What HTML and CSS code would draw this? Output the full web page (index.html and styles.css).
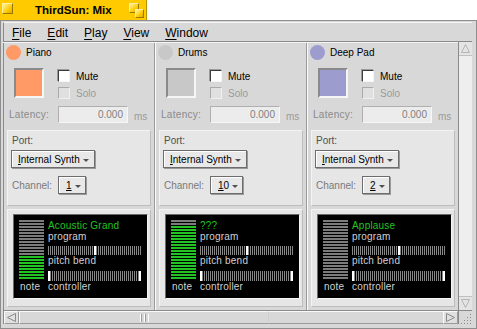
FILE: index.html
```html
<!DOCTYPE html>
<html lang="en">
<head>
  <meta charset="UTF-8" />
  <title>ThirdSun: Mix</title>
  <link rel="stylesheet" href="styles.css">
</head>
<body>
  <div class="tab">
    <span class="close-box"></span>
    <span class="title">ThirdSun: Mix</span>
    <span class="zoom-box"><i class="back"></i><i class="front"></i></span>
  </div>

  <div class="window">
    <nav class="menubar">
      <span><u>F</u>ile</span>
      <span><u>E</u>dit</span>
      <span><u>P</u>lay</span>
      <span><u>V</u>iew</span>
      <span><u>W</u>indow</span>
    </nav>

    <div class="mixer">
      <section class="strip first">
        <div class="strip-head"><span class="dot piano"></span>Piano</div>
        <div class="strip-main">
          <span class="swatch piano"></span>
          <div class="checks">
            <div class="check"><span class="box"></span>Mute</div>
            <div class="check disabled"><span class="box"></span>Solo</div>
          </div>
        </div>
        <div class="latency">
          <span class="lat-label">Latency:</span>
          <span class="field">0.000</span>
          <span class="unit">ms</span>
        </div>
        <div class="port">
          <div class="port-label">Port:</div>
          <span class="menu-field"><u>I</u>nternal Synth<i class="caret"></i></span>
          <div class="channel">
            <span class="channel-label">Channel:</span>
            <span class="menu-field"><u>1</u><i class="caret"></i></span>
          </div>
        </div>
        <div class="display-frame">
          <div class="display">
            <div class="meter"><div class="level" style="height:24px"></div></div>
            <div class="readout">
              <div class="patch">Acoustic Grand</div>
              <div>program</div>
              <div class="bar bend"></div>
              <div>pitch bend</div>
              <div class="bar ctrl"></div>
            </div>
            <div class="note">note</div>
            <div>controller</div>
          </div>
        </div>
      </section>

      <section class="strip">
        <div class="strip-head"><span class="dot drums"></span>Drums</div>
        <div class="strip-main">
          <span class="swatch drums"></span>
          <div class="checks">
            <div class="check"><span class="box"></span>Mute</div>
            <div class="check disabled"><span class="box"></span>Solo</div>
          </div>
        </div>
        <div class="latency">
          <span class="lat-label">Latency:</span>
          <span class="field">0.000</span>
          <span class="unit">ms</span>
        </div>
        <div class="port">
          <div class="port-label">Port:</div>
          <span class="menu-field"><u>I</u>nternal Synth<i class="caret"></i></span>
          <div class="channel">
            <span class="channel-label">Channel:</span>
            <span class="menu-field"><u>1</u>0<i class="caret"></i></span>
          </div>
        </div>
        <div class="display-frame">
          <div class="display">
            <div class="meter"><div class="level" style="height:54px"></div></div>
            <div class="readout">
              <div class="patch">???</div>
              <div>program</div>
              <div class="bar bend"></div>
              <div>pitch bend</div>
              <div class="bar ctrl"></div>
            </div>
            <div class="note">note</div>
            <div>controller</div>
          </div>
        </div>
      </section>

      <section class="strip">
        <div class="strip-head"><span class="dot pad"></span>Deep Pad</div>
        <div class="strip-main">
          <span class="swatch pad"></span>
          <div class="checks">
            <div class="check"><span class="box"></span>Mute</div>
            <div class="check disabled"><span class="box"></span>Solo</div>
          </div>
        </div>
        <div class="latency">
          <span class="lat-label">Latency:</span>
          <span class="field">0.000</span>
          <span class="unit">ms</span>
        </div>
        <div class="port">
          <div class="port-label">Port:</div>
          <span class="menu-field"><u>I</u>nternal Synth<i class="caret"></i></span>
          <div class="channel">
            <span class="channel-label">Channel:</span>
            <span class="menu-field"><u>2</u><i class="caret"></i></span>
          </div>
        </div>
        <div class="display-frame">
          <div class="display">
            <div class="meter"><div class="level" style="height:0px"></div></div>
            <div class="readout">
              <div class="patch">Applause</div>
              <div>program</div>
              <div class="bar bend"></div>
              <div>pitch bend</div>
              <div class="bar ctrl"></div>
            </div>
            <div class="note">note</div>
            <div>controller</div>
          </div>
        </div>
      </section>
    </div>

    <div class="vscroll">
      <span class="arrow">
        <svg width="13" height="13" viewBox="0 0 13 13"><path d="M6.5 2.5 L10.5 10.5 L2.5 10.5 Z" fill="none" stroke="#b4b4b4"/></svg>
      </span>
      <span class="track"></span>
      <span class="arrow">
        <svg width="13" height="13" viewBox="0 0 13 13"><path d="M2.5 2.5 L10.5 2.5 L6.5 10.5 Z" fill="none" stroke="#b4b4b4"/></svg>
      </span>
    </div>

    <div class="hscroll">
      <span class="arrow">
        <svg width="13" height="13" viewBox="0 0 13 13"><path d="M2.5 6.5 L10.5 2.5 L10.5 10.5 Z" fill="none" stroke="#8a8a8a"/></svg>
      </span>
      <span class="thumb"><span class="grip"></span></span>
      <span class="track"></span>
      <span class="arrow">
        <svg width="13" height="13" viewBox="0 0 13 13"><path d="M2.5 2.5 L10.5 6.5 L2.5 10.5 Z" fill="none" stroke="#8a8a8a"/></svg>
      </span>
    </div>

    <div class="corner">
      <svg width="14" height="14" viewBox="0 0 14 14" fill="#8a8a8a">
        <rect x="11" y="3" width="1" height="1"/>
        <rect x="8" y="6" width="1" height="1"/><rect x="11" y="6" width="1" height="1"/>
        <rect x="5" y="9" width="1" height="1"/><rect x="8" y="9" width="1" height="1"/><rect x="11" y="9" width="1" height="1"/>
        <rect x="2" y="12" width="1" height="1"/><rect x="5" y="12" width="1" height="1"/><rect x="8" y="12" width="1" height="1"/><rect x="11" y="12" width="1" height="1"/>
      </svg>
    </div>
  </div>
</body>
</html>
```

FILE: styles.css
```css
* {
  box-sizing: border-box;
}
body {
  margin: 0;
  background: #fff;
  font-family: "Liberation Sans", Arial, sans-serif;
  font-size: 10px;
  color: #000;
}

/* title tab */
.tab {
  width: 147px;
  height: 20px;
  background: #ffcb00;
  border-right: 1px solid #b89400;
  display: flex;
  align-items: center;
}
.close-box {
  width: 11px;
  height: 11px;
  margin: -3px 0 0 2px;
  background: linear-gradient(135deg, #fff3a8, #ffcb00 60%, #e0a800);
  border: 1px solid;
  border-color: #fff0a0 #9a7800 #9a7800 #fff0a0;
}
.title {
  margin-left: 22px;
  font-weight: bold;
  font-size: 11.5px;
}
.zoom-box {
  margin-left: auto;
  margin-right: 2px;
  width: 15px;
  height: 15px;
  display: grid;
}
.zoom-box i {
  grid-area: 1 / 1;
  border: 1px solid;
  border-color: #fff0a0 #9a7800 #9a7800 #fff0a0;
  background: linear-gradient(135deg, #fff3a8, #ffcb00 60%, #e0a800);
}
.zoom-box .back {
  width: 10px;
  height: 10px;
}
.zoom-box .front {
  width: 9px;
  height: 9px;
  margin: 6px 0 0 6px;
}

/* window frame */
.window {
  width: 477px;
  height: 309px;
  background: #d8d8d8;
  border: 1px solid #8e8e8e;
  padding: 1px 4px 4px 2px;
  display: grid;
  grid-template-columns: 1fr 14px;
  grid-template-rows: 20px 1fr 14px;
}
.menubar {
  grid-column: 1 / -1;
  display: flex;
  align-items: center;
  padding: 1px 0 0 0;
  border-left: 1px solid #8a8a8a;
  border-top: 1px solid #f4f4f4;
  border-bottom: 1px solid #8a8a8a;
  font-size: 12px;
}
.menubar span {
  padding: 0 8px;
}
.menubar u {
  text-underline-offset: 2px;
}

/* mixer strips */
.mixer {
  display: flex;
  overflow: hidden;
  border-top: 1px solid #f4f4f4;
}
.strip {
  flex: 0 0 152px;
  border-left: 1px solid #fafafa;
  border-right: 1px solid #9a9a9a;
  display: flex;
  flex-direction: column;
}
.strip.first {
  border-left-color: #8a8a8a;
}
.strip-head {
  display: flex;
  align-items: center;
  gap: 5px;
  height: 15px;
  margin: 2px 0 0 2px;
}
.dot {
  width: 15px;
  height: 15px;
  border-radius: 50%;
}
.piano { background: #ff9966; }
.drums { background: #c8c8c8; }
.pad { background: #9c9ccf; }

.strip-main {
  display: flex;
  margin: 8px 0 0 10px;
  height: 30px;
}
.swatch {
  width: 30px;
  height: 30px;
  border: 2px solid;
  border-color: #8a8a8a #f6f6f6 #f6f6f6 #8a8a8a;
}
.checks {
  margin-left: 14px;
  padding-top: 2px;
  display: flex;
  flex-direction: column;
  gap: 5px;
}
.check {
  display: flex;
  align-items: center;
  gap: 6px;
  height: 12px;
}
.box {
  width: 12px;
  height: 12px;
  background: #fff;
  border: 1px solid;
  border-color: #3c3c3c #f4f4f4 #f4f4f4 #3c3c3c;
  box-shadow: -1px -1px 0 #9a9a9a;
}
.check.disabled {
  color: #9a9a9a;
}
.check.disabled .box {
  background: #e0e0e0;
  border-color: #aaa #f0f0f0 #f0f0f0 #aaa;
  box-shadow: none;
}

.latency {
  display: flex;
  align-items: center;
  height: 17px;
  margin-top: 8px;
  padding-left: 5px;
  color: #8a8a8a;
}
.lat-label {
  width: 49px;
  letter-spacing: 0.3px;
}
.field {
  width: 70px;
  height: 17px;
  background: #ececec;
  border: 1px solid;
  border-color: #b0b0b0 #f6f6f6 #f6f6f6 #b0b0b0;
  text-align: right;
  padding: 2px 4px 0 0;
  color: #808080;
}
.unit {
  margin: 4px 0 0 6px;
  color: #9a9a9a;
}

/* port box */
.port {
  width: 144px;
  height: 76px;
  margin: 7px 0 0 3px;
  background: #e6e6e6;
  border: 1px solid;
  border-color: #f4f4f4 #bcbcbc #bcbcbc #f4f4f4;
  padding: 3px 0 0 3px;
  color: #505050;
}
.port-label {
  padding-left: 1px;
  line-height: 13px;
  margin-bottom: 3px;
}
.menu-field {
  display: inline-flex;
  align-items: center;
  height: 18px;
  padding: 0 5px 0 6px;
  background: #e8e8e8;
  color: #000;
  border: 1px solid #6c6c6c;
  box-shadow: inset 1px 1px 0 #fff, 1px 1px 0 #9a9a9a;
}
.caret {
  width: 0;
  height: 0;
  margin: 3px 0 0 3px;
  border-left: 3px solid transparent;
  border-right: 3px solid transparent;
  border-top: 3px solid #505050;
}
.channel {
  display: flex;
  align-items: center;
  gap: 6px;
  margin-top: 8px;
  padding-left: 1px;
  color: #7a7a7a;
}
.channel .menu-field {
  padding: 0 4px 0 7px;
}

/* display */
.display-frame {
  width: 144px;
  height: 98px;
  margin: 3px 0 0 3px;
  background: #e6e6e6;
  border: 1px solid;
  border-color: #f4f4f4 #bcbcbc #bcbcbc #f4f4f4;
  padding: 4px 2px 0 5px;
}
.display {
  height: 85px;
  background: #000;
  border: 1px solid;
  border-color: #6a6a6a #f6f6f6 #f6f6f6 #6a6a6a;
  padding: 5px 6px 0 5px;
  display: grid;
  grid-template-columns: 25px 1fr;
  grid-template-rows: 61px 11px;
  column-gap: 4px;
  color: #d0d0d0;
  line-height: 11px;
  letter-spacing: 0.2px;
}
.meter {
  height: 60px;
  display: flex;
  flex-direction: column;
  justify-content: flex-end;
  background: repeating-linear-gradient(180deg, #7c7c7c 0 2px, #000 2px 3px);
}
.level {
  background: repeating-linear-gradient(180deg, #22c322 0 2px, #000 2px 3px);
}
.patch {
  color: #22c322;
}
.bar {
  background-color: #000;
}
.bend {
  height: 9px;
  margin: 4px 0 0;
  background-image:
    linear-gradient(90deg, transparent 46px, #fff 46px 48px, transparent 48px),
    repeating-linear-gradient(90deg, #888 0 1px, transparent 1px 2px);
}
.ctrl {
  height: 10px;
  margin-top: 5px;
  background-image:
    linear-gradient(90deg, #fff 0 2px, transparent 2px calc(100% - 2px), #fff calc(100% - 2px)),
    repeating-linear-gradient(90deg, #888 0 1px, transparent 1px 2px);
}
.note {
  padding-left: 1px;
}

/* scrollbars */
.vscroll {
  display: flex;
  flex-direction: column;
  border-left: 1px solid #8a8a8a;
  background: #eeeeee;
}
.vscroll .arrow {
  height: 14px;
  background: #e4e4e4;
  border-bottom: 1px solid #c0c0c0;
  display: flex;
  align-items: center;
  justify-content: center;
}
.vscroll .arrow:last-child {
  border-bottom: 0;
  border-top: 1px solid #c0c0c0;
}
.vscroll .track {
  flex: 1;
}
.hscroll {
  display: flex;
  border-left: 1px solid #8a8a8a;
  border-top: 1px solid #8a8a8a;
  background: #d8d8d8;
}
.hscroll .arrow {
  width: 15px;
  background: #e0e0e0;
  border: 1px solid;
  border-color: #fafafa #9a9a9a #9a9a9a #fafafa;
  display: flex;
  align-items: center;
  justify-content: center;
}
.hscroll .thumb {
  width: 250px;
  background: #d8d8d8;
  border: 1px solid;
  border-color: #fafafa #d0d0d0 #9a9a9a #fafafa;
  display: flex;
  align-items: center;
  justify-content: center;
}
.hscroll .track {
  flex: 1;
  background: #d8d8d8;
  border-top: 1px solid #fafafa;
  border-bottom: 1px solid #9a9a9a;
}
.grip {
  width: 9px;
  height: 8px;
  background: repeating-linear-gradient(90deg, #fff 0 1px, #9a9a9a 1px 2px, transparent 2px 4px);
}
.corner {
  border-top: 1px solid #8a8a8a;
  border-left: 1px solid #8a8a8a;
  background: #d8d8d8;
}
```
